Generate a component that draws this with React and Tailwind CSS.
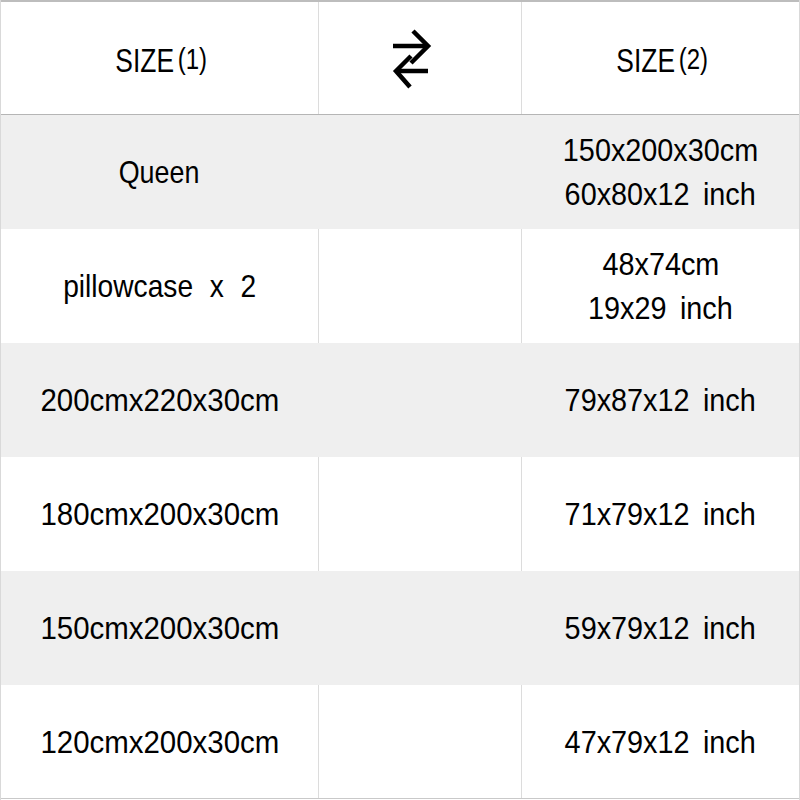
import React from "react";

const rows = [
  { left: "Queen", right: ["150x200x30cm", "60x80x12 inch"], gray: true, scale: "scale-x-[0.84]" },
  { left: "pillowcase x 2", right: ["48x74cm", "19x29 inch"], gray: false, scale: "scale-x-[0.88]" },
  { left: "200cmx220x30cm", right: ["79x87x12 inch"], gray: true, scale: "scale-x-[0.92]" },
  { left: "180cmx200x30cm", right: ["71x79x12 inch"], gray: false, scale: "scale-x-[0.92]" },
  { left: "150cmx200x30cm", right: ["59x79x12 inch"], gray: true, scale: "scale-x-[0.92]" },
  { left: "120cmx200x30cm", right: ["47x79x12 inch"], gray: false, scale: "scale-x-[0.92]" },
];

function SwapIcon() {
  return (
    <svg width="60" height="70" viewBox="390 30 60 70" fill="none" stroke="#000" strokeWidth="4.5" strokeLinecap="butt" strokeLinejoin="miter">
      <path d="M393 53 H427" />
      <path d="M413 38 L428 53 L411 70" />
      <path d="M428 78 H396" />
      <path d="M411 63 L396 78 L410 94" />
    </svg>
  );
}

function Header({ n }) {
  return (
    <span className="inline-flex items-start text-[33px] leading-none text-black">
      <span className="inline-block scale-x-[0.8]">SIZE</span>
      <span className="-ml-[7px] inline-block scale-x-[0.8] text-[30px] font-light">({n})</span>
    </span>
  );
}

export default function App() {
  return (
    <div className="w-[800px] h-[800px] bg-white font-['Liberation_Sans',sans-serif] text-black border-x border-[#d9d9d9]">
      <div className="flex h-[115px] border-t-2 border-b border-t-[#bdbdbd] border-b-[#b5b5b5]">
        <div className="flex w-[317px] items-center justify-center pt-1">
          <Header n={1} />
        </div>
        <div className="flex w-[204px] items-center justify-center border-x border-[#dcdcdc]">
          <SwapIcon />
        </div>
        <div className="flex flex-1 items-center justify-center pt-1">
          <Header n={2} />
        </div>
      </div>
      {rows.map((r, i) => (
        <div
          key={i}
          className={`flex h-[114px] ${r.gray ? "bg-[#efefef]" : "bg-white"} ${i === rows.length - 1 ? "border-b border-[#c9c9c9]" : ""}`}
        >
          <div className="flex w-[317px] items-center justify-center">
            <span className={`inline-block whitespace-nowrap text-[32px] leading-[44px] [word-spacing:10px] ${r.scale}`}>
              {r.left}
            </span>
          </div>
          <div className={`w-[204px] border-x ${r.gray ? "border-transparent" : "border-[#dcdcdc]"}`} />
          <div className="flex flex-1 flex-col items-center justify-center">
            {r.right.map((t, j) => (
              <span key={j} className="inline-block whitespace-nowrap text-[32px] leading-[44px] [word-spacing:6px] scale-x-[0.9]">
                {t}
              </span>
            ))}
          </div>
        </div>
      ))}
    </div>
  );
}
